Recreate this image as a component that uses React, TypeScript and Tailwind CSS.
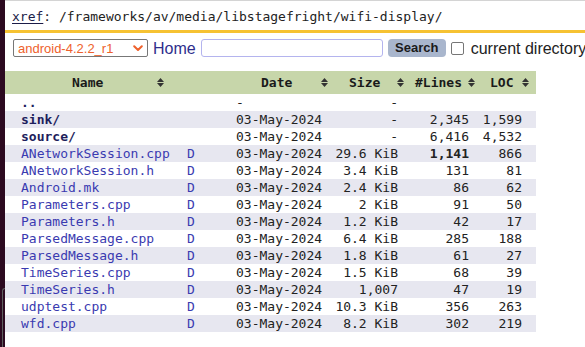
import React from "react";

type Row = {
  name: string;
  kind: "up" | "dir" | "file";
  date: string;
  size: string;
  lines: string;
  loc: string;
  boldLines?: boolean;
};

const ROWS: Row[] = [
  { name: "..", kind: "up", date: "-", size: "-", lines: "", loc: "" },
  { name: "sink/", kind: "dir", date: "03-May-2024", size: "-", lines: "2,345", loc: "1,599" },
  { name: "source/", kind: "dir", date: "03-May-2024", size: "-", lines: "6,416", loc: "4,532" },
  { name: "ANetworkSession.cpp", kind: "file", date: "03-May-2024", size: "29.6 KiB", lines: "1,141", loc: "866", boldLines: true },
  { name: "ANetworkSession.h", kind: "file", date: "03-May-2024", size: "3.4 KiB", lines: "131", loc: "81" },
  { name: "Android.mk", kind: "file", date: "03-May-2024", size: "2.4 KiB", lines: "86", loc: "62" },
  { name: "Parameters.cpp", kind: "file", date: "03-May-2024", size: "2 KiB", lines: "91", loc: "50" },
  { name: "Parameters.h", kind: "file", date: "03-May-2024", size: "1.2 KiB", lines: "42", loc: "17" },
  { name: "ParsedMessage.cpp", kind: "file", date: "03-May-2024", size: "6.4 KiB", lines: "285", loc: "188" },
  { name: "ParsedMessage.h", kind: "file", date: "03-May-2024", size: "1.8 KiB", lines: "61", loc: "27" },
  { name: "TimeSeries.cpp", kind: "file", date: "03-May-2024", size: "1.5 KiB", lines: "68", loc: "39" },
  { name: "TimeSeries.h", kind: "file", date: "03-May-2024", size: "1,007", lines: "47", loc: "19" },
  { name: "udptest.cpp", kind: "file", date: "03-May-2024", size: "10.3 KiB", lines: "356", loc: "263" },
  { name: "wfd.cpp", kind: "file", date: "03-May-2024", size: "8.2 KiB", lines: "302", loc: "219" },
];

function SortIcon({ className }: { className: string }) {
  return (
    <svg width="7" height="9" viewBox="0 0 7 9" className={className}>
      <path d="M0 4 L3.5 0 L7 4 Z" fill="#333" />
      <path d="M0 5 L3.5 9 L7 5 Z" fill="#333" />
    </svg>
  );
}

export default function App() {
  return (
    <div className="flex h-[347px] w-[585px] overflow-hidden bg-white">
      {/* window edge on the left */}
      <div className="flex h-full w-[5px] shrink-0 flex-col bg-[#2c0a20]">
        <div className="ml-[2px] mt-[288px] flex-1 rounded-tl-[4px] border-l border-t border-[#5e5e5e]" />
      </div>

      <div className="min-w-0 flex-1 overflow-hidden border-t border-[#d4d4d4] font-['DejaVu_Sans_Mono',monospace] text-[13px] leading-[17px] text-[#222]">
        <div className="whitespace-nowrap pl-[7px] pt-[7px]">
          <a className="text-[#1c1c48] underline underline-offset-2">xref</a>: /frameworks/av/media/libstagefright/wifi-display/
        </div>

        <div className="mt-[5px] h-[3px] bg-[#f6c232]" />

        <div className="mt-[6px] flex h-[18px] items-center whitespace-nowrap font-['Liberation_Sans',Arial,sans-serif]">
          <div className="ml-[8px] flex h-[18px] w-[135px] shrink-0 items-center justify-between rounded-[2px] border border-[#777] pl-[4px] pr-[4px] text-[13px] text-[#ee612c]">
            <span>android-4.2.2_r1</span>
            <svg width="10" height="7" viewBox="0 0 10 7">
              <path d="M1.2 1.2 L5 5 L8.8 1.2" stroke="#ee612c" strokeWidth="2" fill="none" strokeLinecap="round" strokeLinejoin="round" />
            </svg>
          </div>
          <span className="ml-[5px] text-[16px] text-[#2e2e8c]">Home</span>
          <div className="ml-[5px] h-[18px] w-[182px] shrink-0 rounded-[3px] border border-[#b4b4ee] bg-white" />
          <button className="ml-[5px] h-[18px] w-[58px] shrink-0 rounded-[4px] bg-[#a9b6cd] text-[13px] font-bold leading-[18px] text-[#1a1a1a]">
            Search
          </button>
          <div className="ml-[5px] h-[13px] w-[13px] shrink-0 rounded-[2px] border border-[#767676] bg-white" />
          <span className="ml-[7px] text-[16px] text-[#222]">current directory</span>
        </div>

        <table className="mt-[14px] w-[531px] table-fixed border-collapse">
          <colgroup>
            <col className="w-[175px]" />
            <col className="w-[45px]" />
            <col className="w-[110px]" />
            <col className="w-[70px]" />
            <col className="w-[71px]" />
            <col className="w-[60px]" />
          </colgroup>
          <thead>
            <tr className="h-[23px] bg-[#c7d6aa] font-bold text-[#1a1a1a]">
              <th className="p-0">
                <div className="flex items-center pl-[67px]">
                  Name<SortIcon className="ml-[54px]" />
                </div>
              </th>
              <th className="p-0" />
              <th className="p-0">
                <div className="flex items-center pl-[36px]">
                  Date<SortIcon className="ml-[29px]" />
                </div>
              </th>
              <th className="p-0">
                <div className="flex items-center pl-[14px]">
                  Size<SortIcon className="ml-[17px]" />
                </div>
              </th>
              <th className="p-0">
                <div className="flex items-center pl-[10px]">
                  #Lines<SortIcon className="ml-[6px]" />
                </div>
              </th>
              <th className="p-0">
                <div className="flex items-center pl-[14px]">
                  LOC<SortIcon className="ml-[9px]" />
                </div>
              </th>
            </tr>
          </thead>
          <tbody>
            {ROWS.map((r, i) => (
              <tr key={r.name} className={i % 2 === 1 ? "h-[17px] bg-[#e7e7f0]" : "h-[17px] bg-white"}>
                <td
                  className={
                    r.kind === "file"
                      ? "p-0 pl-[16px] text-[#3a3ab0]"
                      : "p-0 pl-[16px] font-bold text-[#1e1e5c]"
                  }
                >
                  {r.name}
                </td>
                <td className="p-0 pl-[7px] text-[#3a3ab0]">{r.kind === "file" ? "D" : ""}</td>
                <td className="p-0 pl-[11px]">{r.date}</td>
                <td className="p-0 pr-[7px] text-right">{r.size}</td>
                <td className={r.boldLines ? "p-0 pr-[7px] text-right font-bold" : "p-0 pr-[7px] text-right"}>
                  {r.lines}
                </td>
                <td className="p-0 pr-[14px] text-right">{r.loc}</td>
              </tr>
            ))}
          </tbody>
        </table>
      </div>
    </div>
  );
}
